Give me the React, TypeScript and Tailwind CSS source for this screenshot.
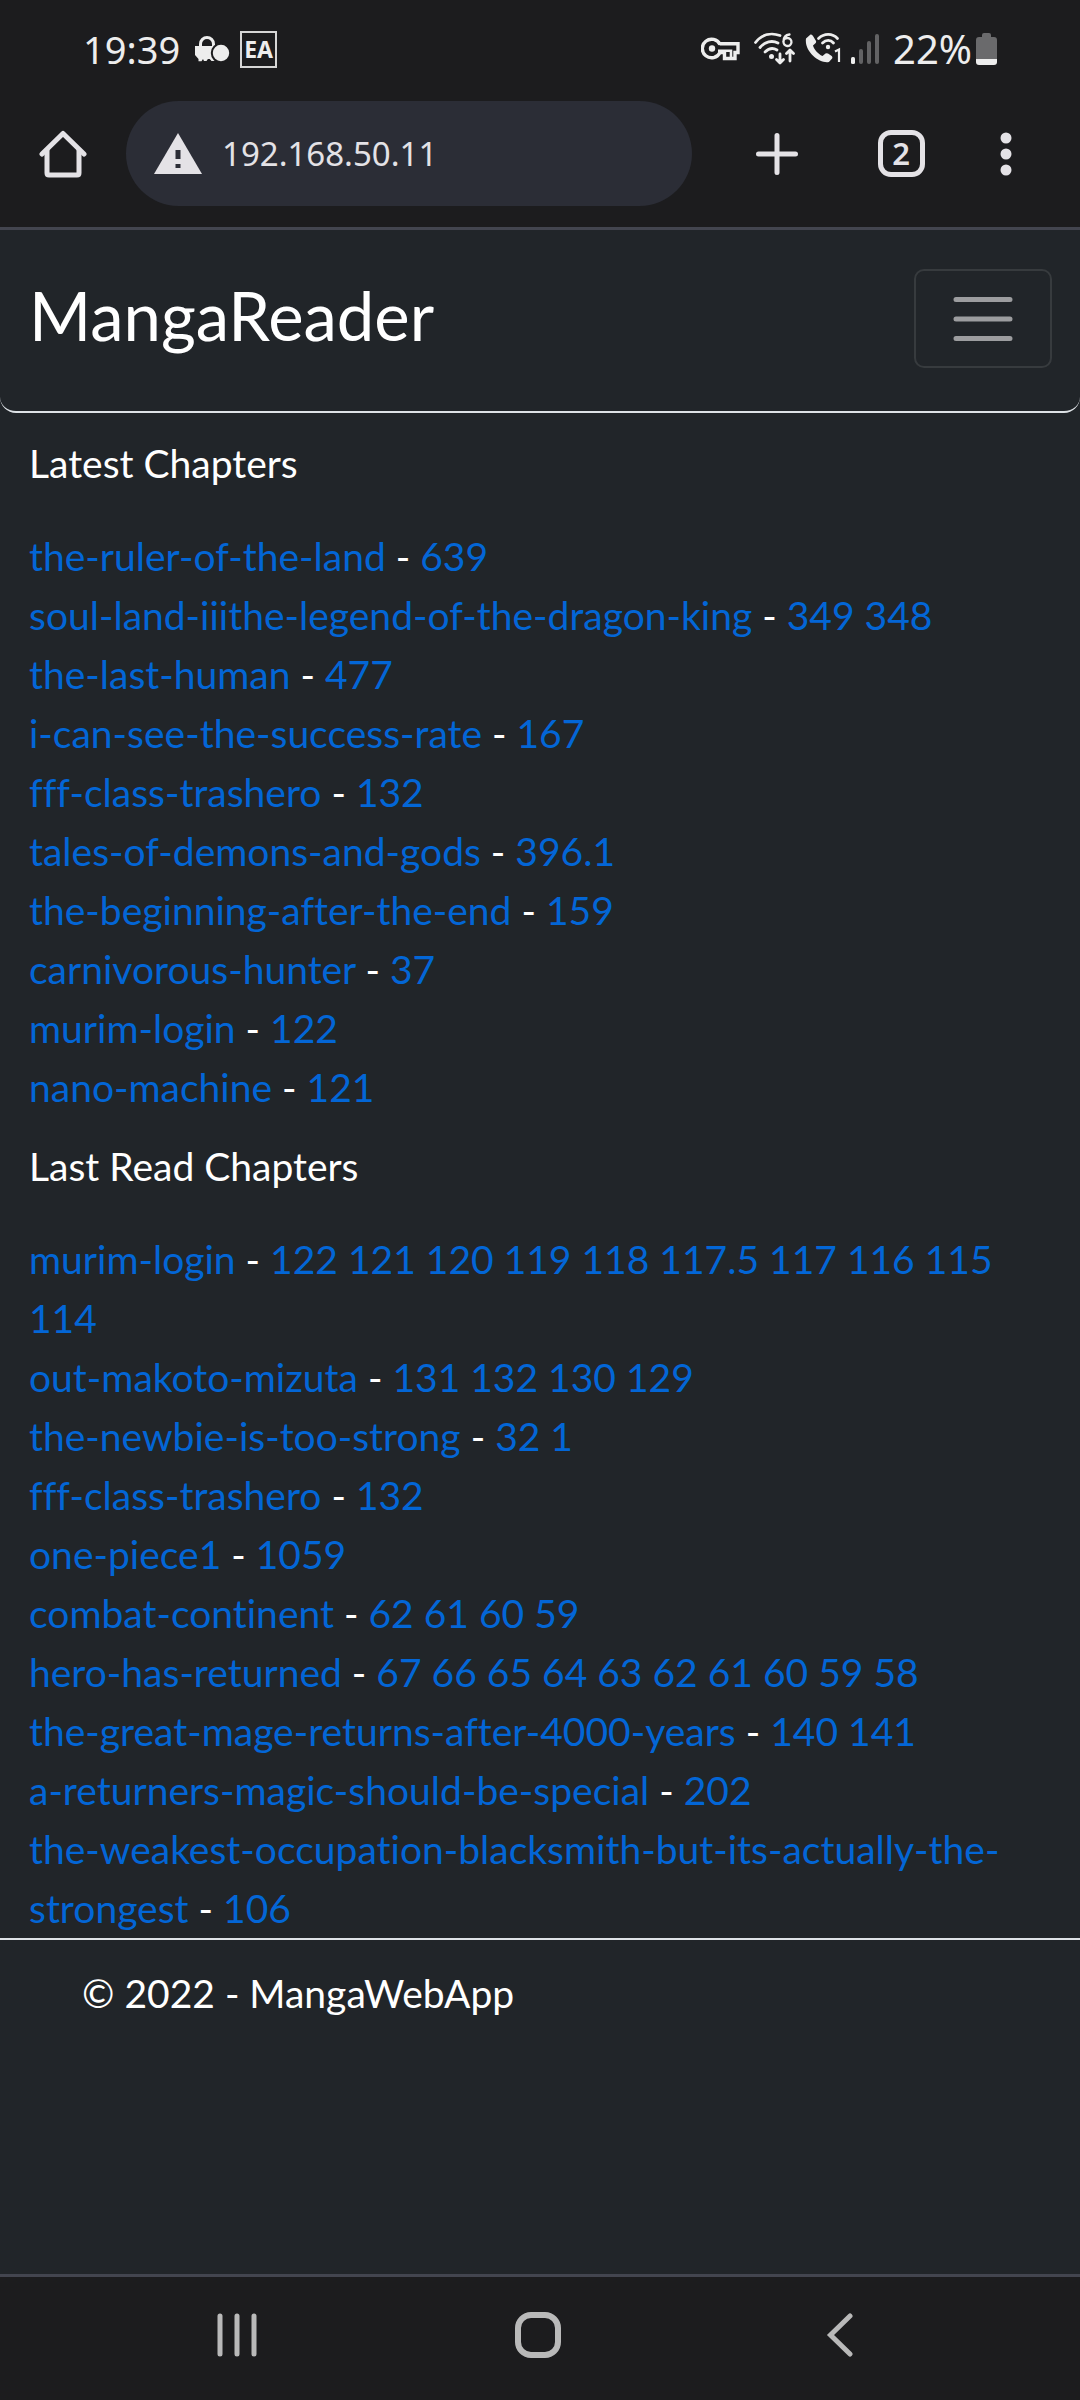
type Entry = { title: string; chapters: string[] };

const latest: Entry[] = [
  { title: "the-ruler-of-the-land", chapters: ["639"] },
  { title: "soul-land-iiithe-legend-of-the-dragon-king", chapters: ["349", "348"] },
  { title: "the-last-human", chapters: ["477"] },
  { title: "i-can-see-the-success-rate", chapters: ["167"] },
  { title: "fff-class-trashero", chapters: ["132"] },
  { title: "tales-of-demons-and-gods", chapters: ["396.1"] },
  { title: "the-beginning-after-the-end", chapters: ["159"] },
  { title: "carnivorous-hunter", chapters: ["37"] },
  { title: "murim-login", chapters: ["122"] },
  { title: "nano-machine", chapters: ["121"] },
];

const lastRead: Entry[] = [
  {
    title: "murim-login",
    chapters: ["122", "121", "120", "119", "118", "117.5", "117", "116", "115", "114"],
  },
  { title: "out-makoto-mizuta", chapters: ["131", "132", "130", "129"] },
  { title: "the-newbie-is-too-strong", chapters: ["32", "1"] },
  { title: "fff-class-trashero", chapters: ["132"] },
  { title: "one-piece1", chapters: ["1059"] },
  { title: "combat-continent", chapters: ["62", "61", "60", "59"] },
  {
    title: "hero-has-returned",
    chapters: ["67", "66", "65", "64", "63", "62", "61", "60", "59", "58"],
  },
  { title: "the-great-mage-returns-after-4000-years", chapters: ["140", "141"] },
  { title: "a-returners-magic-should-be-special", chapters: ["202"] },
  {
    title: "the-weakest-occupation-blacksmith-but-its-actually-the-strongest",
    chapters: ["106"],
  },
];

function StatusBar() {
  return (
    <div className="flex h-[98px] items-center justify-between pr-[82px] pl-[83px] font-['Noto_Sans',sans-serif] text-[#ededed]">
      <div className="flex items-center">
        <span className="text-[38px] leading-[48px]">19:39</span>
        <svg className="ml-3.5 h-[28px] w-[36px]" viewBox="0 0 36 28" aria-hidden="true">
          <path d="M6.5 13V9a6.5 6.5 0 0 1 13 0v4" fill="none" stroke="#ededed" strokeWidth="3" />
          <path
            d="M1 11h21.5v3a9 9 0 0 0-3 9l1.500 3h-3.500l-1.800-2h-1.800l-1.400 2h-2.500l-1-2-1.500 2.300H4.500V24L1 20Z"
            fill="#ededed"
          />
          <circle cx="27" cy="18" r="9.200" fill="#ededed" stroke="#1c1c1e" strokeWidth="2" />
        </svg>
        <span className="ml-2.5 flex h-[37px] w-[37px] items-center justify-center border-2 border-[#d6d6d6] text-[23px] leading-none font-bold">
          EA
        </span>
      </div>
      <div className="flex items-center">
        <svg className="h-[24px] w-[40px]" viewBox="0 0 40 24" aria-hidden="true">
          <path
            d="M19 7.500A9.300 9.300 0 1 0 19 15.500H23.500V21.500H34V15.500H37V6.800H18.600"
            fill="none"
            stroke="#ededed"
            strokeWidth="3.400"
          />
          <path d="M17 13.700H30V20" fill="none" stroke="#ededed" strokeWidth="2.600" />
          <circle cx="11" cy="11.500" r="3.200" fill="#ededed" />
        </svg>
        <svg className="ml-3 h-[36px] w-[42px]" viewBox="0 0 42 36" aria-hidden="true">
          <g fill="none" stroke="#ededed" strokeWidth="2.800" strokeLinecap="round" strokeLinejoin="round">
            <path d="M2.500 11.500C9 3 18.500 1.500 27 4.500" />
            <path d="M7 16.500c5-6 12-7.500 18-4.500" />
            <path d="M12 21c4-4 8-4.500 12-2" />
            <path d="M27 23v8.500M23.500 28.500l3.500 3.500 3.500-3.500" />
            <path d="M37 30V20M33.500 22.500 37 19l3.500 3.500" />
            <path d="M36.500 3.500c-4 .5-6 3.500-6 7a4 4 0 1 0 4-3.500c-2 0-4 1.500-4 3.500" strokeWidth="2.300" />
          </g>
          <circle cx="18.500" cy="25.500" r="2.500" fill="#ededed" />
        </svg>
        <svg className="ml-2.5 h-[36px] w-[38px]" viewBox="0 0 38 36" aria-hidden="true">
          <path
            d="M1 7.500 5.500 3.500Q7 3 8 5l3 5q.5 1.500-.8 2.600L8 14.500c1 4 5 8.500 9.500 10.500l3-2.600q1.300-.6 2.500.2l3.700 2.400q1.300 1.400.2 2.800l-3 3.200C15 33-1 21 1 7.500Z"
            fill="#ededed"
          />
          <g fill="none" stroke="#ededed" strokeWidth="2.800" strokeLinecap="round">
            <path d="M13.500 7.500c5.500-5.500 14-5.500 19 0" />
            <path d="M17.500 12c3.500-3.500 8-3.500 11 0" />
            <path d="M30 20.500l4-2V31" strokeWidth="2.200" strokeLinecap="butt" />
          </g>
          <circle cx="23" cy="16" r="2.200" fill="#ededed" />
        </svg>
        <svg className="ml-2 h-[32px] w-[28px]" viewBox="0 0 28 32" aria-hidden="true">
          <g fill="#626264">
            <rect x="8" y="16" width="4" height="15" rx="2" />
            <rect x="16" y="8" width="4" height="23" rx="2" />
            <rect x="24" y="1" width="4" height="30" rx="2" />
          </g>
          <rect x="0" y="24" width="4" height="7" rx="1.500" fill="#ededed" />
        </svg>
        <span className="ml-3.5 text-[40px] leading-[48px]">22%</span>
        <svg className="ml-1 h-[34px] w-[22px]" viewBox="0 0 22 34" aria-hidden="true">
          <path d="M6 3q0-2 2-2h5q2 0 2 2v2h3q3 0 3 3v19H0V8q0-3 3-3h3Z" fill="#6a6a6c" />
          <path d="M0 27h21v3q0 3-3 3H3q-3 0-3-3Z" fill="#ededed" />
        </svg>
      </div>
    </div>
  );
}

function BrowserBar() {
  return (
    <div className="flex items-center pt-[3px] pr-2 pb-[21px] text-[#e4e2e6]">
      <button type="button" aria-label="Home page" className="flex w-[126px] justify-center">
        <svg className="h-12 w-12" viewBox="0 0 48 48" fill="none" stroke="currentColor" strokeWidth="5" strokeLinecap="round" strokeLinejoin="round" aria-hidden="true">
          <path d="M3 24 24 3.500 45 24" />
          <path d="M8 20V43q0 2 2 2H38q2 0 2-2V20" />
        </svg>
      </button>
      <label className="flex h-[105px] min-w-0 flex-1 items-center rounded-full bg-[#2b2d36] pl-7">
        <svg className="h-[42px] w-12 shrink-0" viewBox="0 0 48 42" aria-hidden="true">
          <path d="M24 0 48 41H0Z" fill="currentColor" />
          <path d="M21.500 17h5v9h-5zM21.500 31h5v4h-5z" fill="#2b2d36" />
        </svg>
        <input
          type="text"
          aria-label="Address"
          defaultValue="192.168.50.11"
          className="ml-5 min-w-0 flex-1 bg-transparent font-['Noto_Sans',sans-serif] text-[33px] leading-[48px] outline-none"
        />
      </label>
      <button type="button" aria-label="New tab" className="flex w-[170px] justify-center">
        <svg className="h-[42px] w-[42px]" viewBox="0 0 42 42" fill="none" stroke="currentColor" strokeWidth="5" strokeLinecap="round" aria-hidden="true">
          <path d="M21 2.500v37M2.500 21h37" />
        </svg>
      </button>
      <button type="button" aria-label="Open tabs: 2" className="flex w-[78px] justify-center">
        <span className="flex h-[47px] w-[47px] items-center justify-center rounded-[13px] border-5 border-current font-['Noto_Sans',sans-serif] text-[31px] leading-none font-semibold">
          2
        </span>
      </button>
      <button type="button" aria-label="More options" className="flex w-[132px] justify-center">
        <svg className="h-11 w-3" viewBox="0 0 12 44" fill="currentColor" aria-hidden="true">
          <circle cx="6" cy="6" r="5.500" />
          <circle cx="6" cy="22" r="5.500" />
          <circle cx="6" cy="38" r="5.500" />
        </svg>
      </button>
    </div>
  );
}

function ChapterSection({ heading, entries }: { heading: string; entries: Entry[] }) {
  return (
    <section className="mb-5 last:mb-0">
      <h2 className="mb-[34px]">{heading}</h2>
      <ul>
        {entries.map((entry) => (
          <li key={entry.title}>
            <a href="#" className="text-[#0366d6]">
              {entry.title}
            </a>{" "}
            <span>-</span>{" "}
            {entry.chapters.map((chapter) => (
              <a key={chapter} href="#" className="text-[#0366d6]">
                {chapter + " "}
              </a>
            ))}
          </li>
        ))}
      </ul>
    </section>
  );
}

export default function App() {
  return (
    <div className="flex min-h-screen flex-col bg-[#212529] font-['Lato',sans-serif] text-[39px] leading-[59px] text-white [font-variant-ligatures:none]">
      <div className="border-b-3 border-[#43454f] bg-[#1c1c1e]">
        <StatusBar />
        <BrowserBar />
      </div>

      <header className="flex items-start justify-between rounded-b-2xl border-b-2 border-[#dee2e6] pt-[39px] pr-7 pb-[43px] pl-[29px]">
        <a href="#" className="text-[67px] leading-[92px]">
          MangaReader
        </a>
        <button
          type="button"
          aria-label="Toggle navigation"
          className="flex h-[99px] w-[138px] items-center justify-center rounded-[10px] border-2 border-[#373b3e]"
        >
          <svg className="h-[46px] w-[60px]" viewBox="0 0 60 46" stroke="#9c9d9f" strokeWidth="5" strokeLinecap="round" aria-hidden="true">
            <path d="M3 3.500h54M3 23h54M3 42.500h54" />
          </svg>
        </button>
      </header>

      <main className="px-[29px] pt-[21px]">
        <ChapterSection heading="Latest Chapters" entries={latest} />
        <ChapterSection heading="Last Read Chapters" entries={lastRead} />
      </main>

      <footer className="border-t-2 border-[#dee2e6] px-[82px] pt-6">© 2022 - MangaWebApp</footer>

      <nav aria-label="System" className="mt-auto grid h-[126px] grid-cols-3 border-t-3 border-[#43454f] bg-[#1c1c1e] pr-[89px] pb-2 pl-[86px] text-[#b9b9b9]">
        <button type="button" aria-label="Recent apps" className="flex items-center justify-center">
          <svg className="h-11 w-11" viewBox="0 0 44 44" stroke="currentColor" strokeWidth="5" strokeLinecap="round" aria-hidden="true">
            <path d="M5 3v38M22 3v38M39 3v38" />
          </svg>
        </button>
        <button type="button" aria-label="Home" className="flex items-center justify-center">
          <svg className="h-[46px] w-[46px]" viewBox="0 0 46 46" fill="none" stroke="currentColor" strokeWidth="6" aria-hidden="true">
            <rect x="3" y="3" width="40" height="40" rx="13" />
          </svg>
        </button>
        <button type="button" aria-label="Back" className="flex items-center justify-center">
          <svg className="h-11 w-7" viewBox="0 0 28 44" fill="none" stroke="currentColor" strokeWidth="5" strokeLinecap="round" aria-hidden="true">
            <path d="M24 3 4.500 22 24 41" strokeLinejoin="miter" />
          </svg>
        </button>
      </nav>
    </div>
  );
}
